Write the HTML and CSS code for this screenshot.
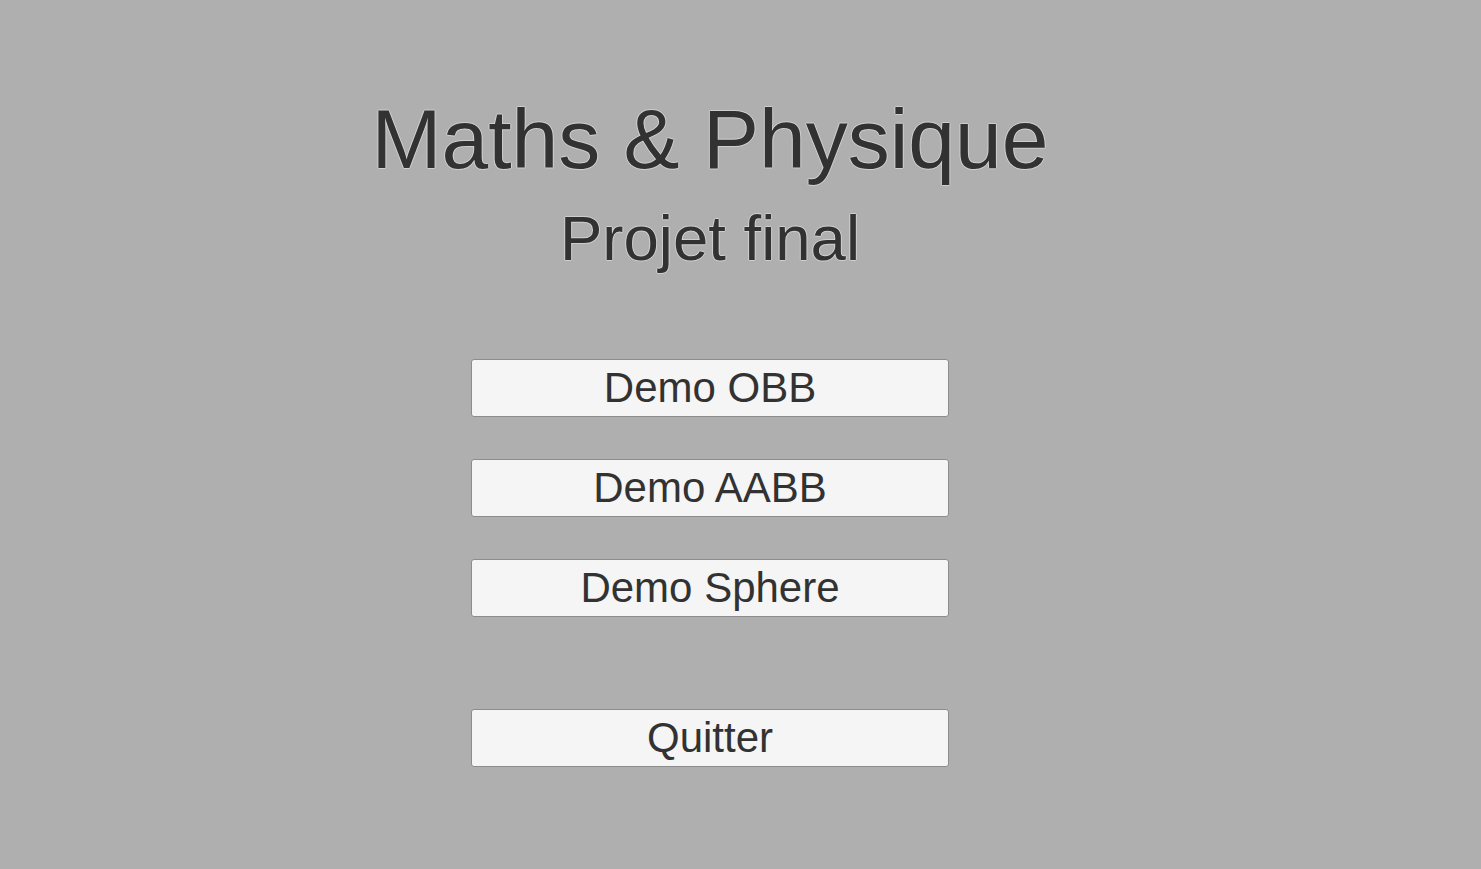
FILE: index.html
```html
<!DOCTYPE html>
<html lang="fr">
<head>
<meta charset="utf-8">
<title>Maths &amp; Physique</title>
<link rel="stylesheet" href="styles.css">
</head>
<body>
<div class="screen">
  <main class="menu">
    <h1 class="title">Maths &amp; Physique</h1>
    <h2 class="subtitle">Projet final</h2>
    <div class="buttons">
      <button class="btn">Demo OBB</button>
      <button class="btn">Demo AABB</button>
      <button class="btn">Demo Sphere</button>
      <button class="btn btn-quit">Quitter</button>
    </div>
  </main>
</div>
</body>
</html>
```
FILE: styles.css
```css
html, body {
  margin: 0;
  padding: 0;
}
body {
  background: #afafaf;
  width: 1481px;
  height: 869px;
  overflow: hidden;
  font-family: "Liberation Sans", Arial, sans-serif;
  color: #323232;
}
.screen {
  display: flex;
  justify-content: center;
  padding-right: 61px;
}
.menu {
  width: 478px;
  display: flex;
  flex-direction: column;
  align-items: center;
  padding-top: 91px;
}
.title {
  margin: 0;
  font-size: 84px;
  font-weight: normal;
  line-height: normal;
  white-space: nowrap;
  text-shadow: 1px 0 0 rgba(220,220,220,0.7), -1px 0 0 rgba(220,220,220,0.7), 0 1px 0 rgba(220,220,220,0.7), 0 -1px 0 rgba(220,220,220,0.7);
}
.subtitle {
  margin: 14px 0 0;
  font-size: 63.5px;
  font-weight: normal;
  line-height: normal;
  white-space: nowrap;
  text-shadow: 1px 0 0 rgba(220,220,220,0.7), -1px 0 0 rgba(220,220,220,0.7), 0 1px 0 rgba(220,220,220,0.7), 0 -1px 0 rgba(220,220,220,0.7);
}
.buttons {
  margin-top: 85px;
  width: 100%;
  display: flex;
  flex-direction: column;
  gap: 42px;
}
.btn {
  box-sizing: border-box;
  width: 478px;
  height: 58px;
  margin: 0;
  padding: 0;
  background: #f5f5f5;
  border: 1px solid #8c8c8c;
  border-radius: 3px;
  font-family: "Liberation Sans", Arial, sans-serif;
  font-size: 42px;
  line-height: normal;
  color: #323232;
  display: flex;
  align-items: center;
  justify-content: center;
}
.btn-quit {
  margin-top: 50px;
}
```
